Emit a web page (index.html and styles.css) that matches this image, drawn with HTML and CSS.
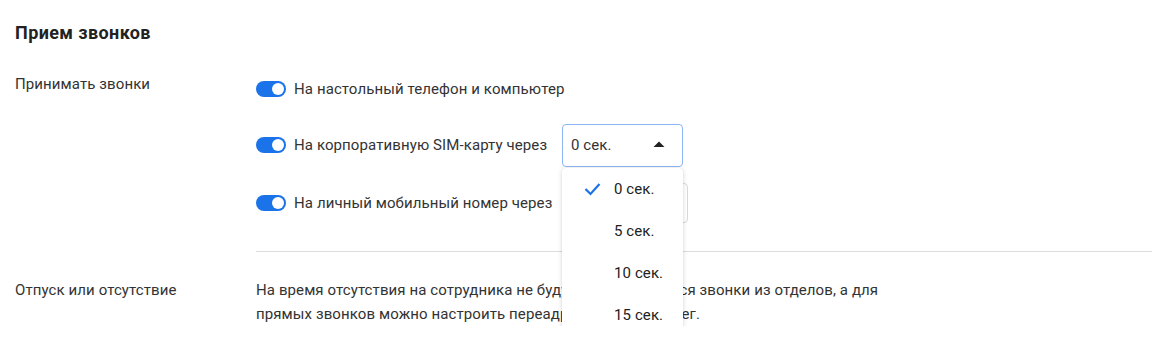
FILE: index.html
```html
<!DOCTYPE html>
<html lang="ru">
<head>
  <meta charset="UTF-8">
  <title>Прием звонков</title>
  <link rel="stylesheet" href="styles.css">
</head>
<body>
  <div class="page">
    <h2 class="title">Прием звонков</h2>

    <div class="row">
      <div class="label label-top">Принимать звонки</div>
      <div class="options">
        <div class="option">
          <span class="toggle on"><i></i></span>
          <span class="option-text">На настольный телефон и компьютер</span>
        </div>
        <div class="option">
          <span class="toggle on"><i></i></span>
          <span class="option-text fixed">На корпоративную SIM-карту через</span>
          <div class="select-wrap">
            <div class="select active">
              <span>0 сек.</span>
              <svg class="arrow" width="12" height="6" viewBox="0 0 12 6"><path d="M0.5 6 L6 0.5 L11.5 6 Z" fill="#222"/></svg>
            </div>
            <ul class="menu">
              <li class="selected">
                <svg class="check" width="17" height="14" viewBox="0 0 17 14"><polyline points="1.5,7 6.5,12 15.5,2" fill="none" stroke="#1a73e8" stroke-width="2.2"/></svg>
                0 сек.
              </li>
              <li>5 сек.</li>
              <li>10 сек.</li>
              <li>15 сек.</li>
            </ul>
          </div>
        </div>
        <div class="option last">
          <span class="toggle on"><i></i></span>
          <span class="option-text fixed">На личный мобильный номер через</span>
          <div class="select small">
            <span>0 сек.</span>
          </div>
        </div>
      </div>
    </div>

    <div class="row">
      <div class="label">Отпуск или отсутствие</div>
      <p class="note">На время отсутствия на сотрудника не будут распределяться звонки из отделов, а для прямых звонков можно настроить переадресацию на коллег.</p>
    </div>
  </div>
</body>
</html>
```

FILE: styles.css
```css
*{
  margin: 0;
  padding: 0;
  box-sizing: border-box;
}
body{
  font-family: Roboto, "Liberation Sans", sans-serif;
  font-size: 15px;
  letter-spacing: 0.1px;
  color: #333;
  background: #fff;
}

.page{
  padding: 20px 12px 0 15px;
}

.title{
  font-size: 18px;
  font-weight: 700;
  letter-spacing: 0.4px;
  line-height: 26px;
  color: #222;
  margin-bottom: 21px;
}

.row{
  display: grid;
  grid-template-columns: 241px 1fr;
}

.label{
  line-height: 24px;
}
.label-top{
  margin-top: 5px;
}

.options{
  display: flex;
  flex-direction: column;
  gap: 12px;
  padding-bottom: 26px;
  border-bottom: 1px solid #dcdcdc;
  margin-bottom: 26px;
}

.option{
  display: flex;
  align-items: center;
  height: 44px;
}
.option.last{
  margin-top: 2px;
}

.toggle{
  position: relative;
  width: 30px;
  height: 16px;
  border-radius: 8px;
  background: #c8c8c8;
  margin-right: 8px;
  flex: none;
}
.toggle.on{
  background: #1a73e8;
}
.toggle i{
  position: absolute;
  top: 2px;
  left: 2px;
  width: 12px;
  height: 12px;
  border-radius: 50%;
  background: #fff;
}
.toggle.on i{
  left: 16px;
}

.option-text{
  white-space: nowrap;
}
.option-text.fixed{
  width: 268px;
  flex: none;
}

.select-wrap{
  position: relative;
}

.select{
  display: flex;
  align-items: center;
  justify-content: space-between;
  width: 121px;
  height: 43px;
  padding: 0 17px 0 8px;
  border: 1px solid #dadada;
  border-radius: 4px;
  background: #fff;
}
.select.active{
  border-color: #8db5f3;
}
.select.small{
  width: 126px;
  height: 40px;
}
.arrow{
  margin-top: -2px;
}

.menu{
  position: absolute;
  top: 44px;
  left: 0;
  width: 121px;
  list-style: none;
  background: #fff;
  border-radius: 4px;
  box-shadow: 0 1px 5px rgba(0, 0, 0, .16), 0 0 1px rgba(0, 0, 0, .12);
  z-index: 10;
}
.menu li{
  position: relative;
  height: 42px;
  line-height: 42px;
  padding-left: 52px;
  color: #222;
}
.check{
  position: absolute;
  left: 22px;
  top: 14px;
}

.note{
  line-height: 24px;
  max-width: 640px;
}
```
